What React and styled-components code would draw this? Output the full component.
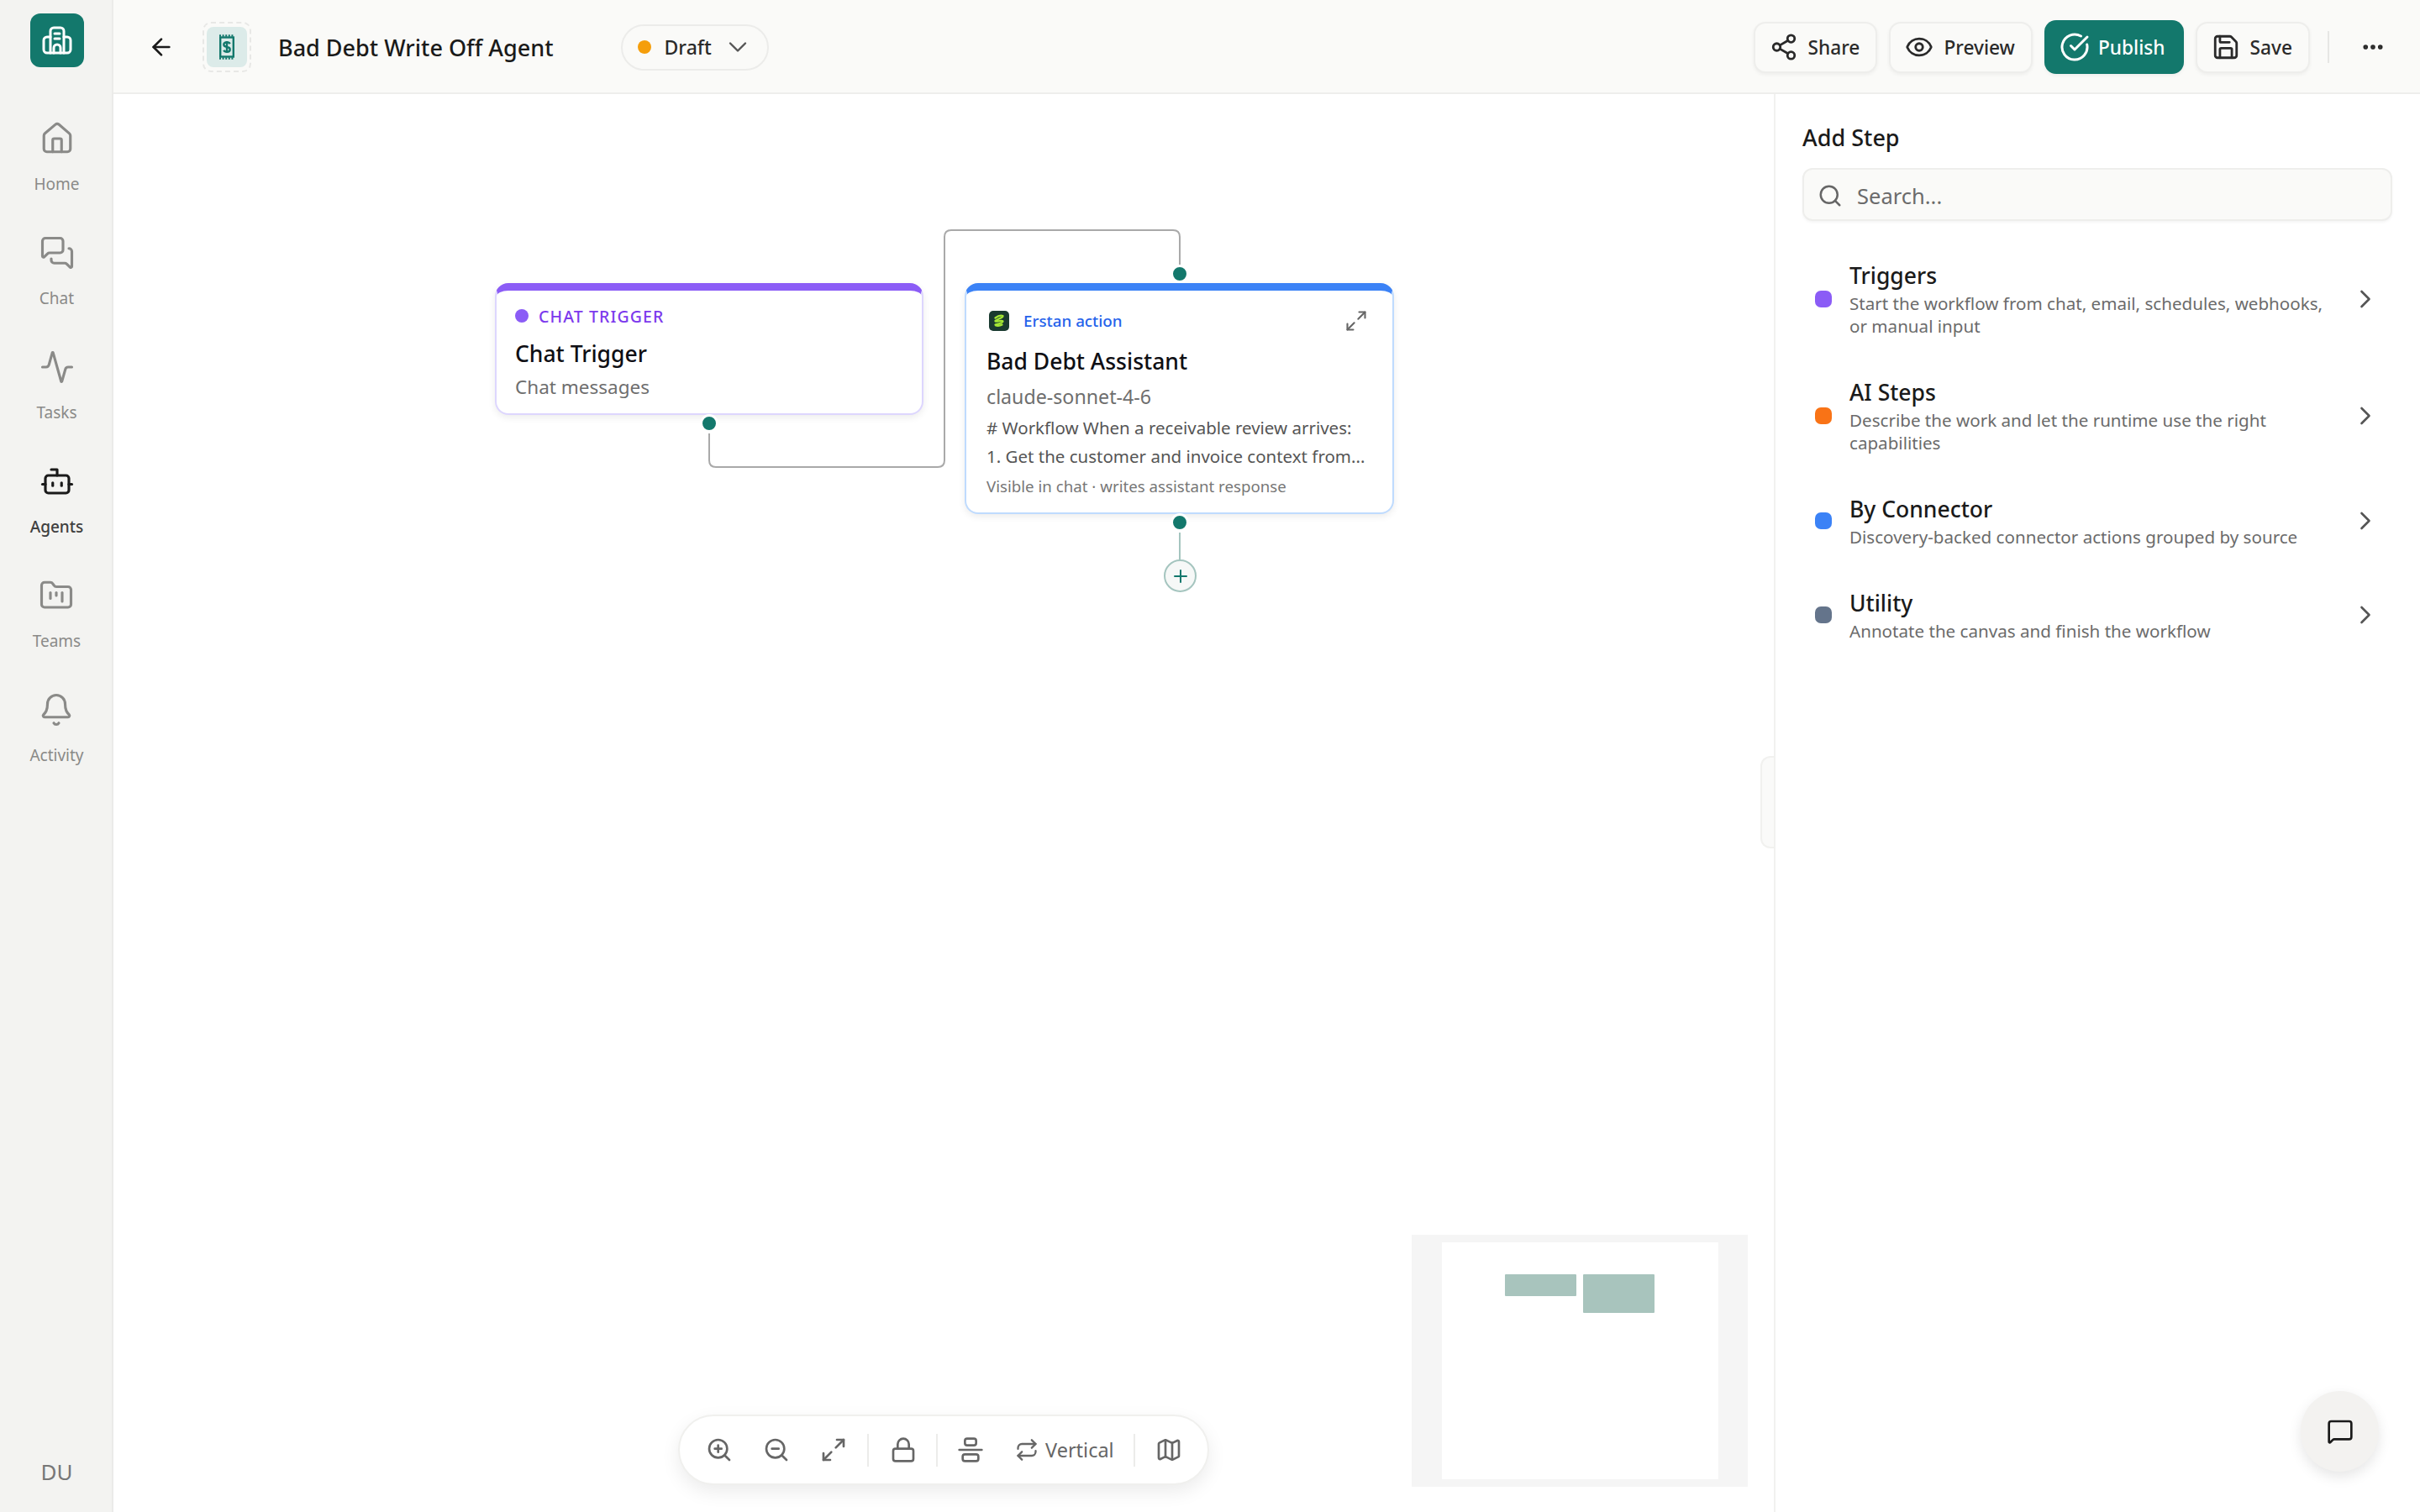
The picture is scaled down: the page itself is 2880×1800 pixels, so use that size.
import React from 'react';
import styled, { createGlobalStyle } from 'styled-components';
import {
  Activity, AlignVerticalJustifyCenter, ArrowLeft, Bell, Bot, ChevronDown, ChevronRight,
  CircleCheckBig, Ellipsis, Eye, FolderKanban, House, Lock, Map as MapIcon, Maximize2, MessageSquare,
  MessagesSquare, Plus, Repeat, Save, Search, Share2, ZoomIn, ZoomOut,
} from 'lucide-react';

const teal = '#13786c';
const font = '"Noto Sans", "Open Sans", sans-serif';

const GlobalStyle = createGlobalStyle`
  html, body { margin: 0; padding: 0; width: 100%; height: 100%; }
  body { font-family: ${font}; background: #fff; color: #1a1a1a; overflow: hidden; }
  * { box-sizing: border-box; }
`;

const Shell = styled.div`
  display: flex;
  width: 2880px;
  height: 1800px;
`;

// left rail
const Rail = styled.nav`
  width: 135px;
  flex: none;
  display: flex;
  flex-direction: column;
  align-items: center;
  background: #f3f3f1;
  border-right: 2px solid #ebebe9;
  padding: 16px 0 30px 2px;
`;

const Logo = styled.div`
  width: 64px;
  height: 64px;
  flex: none;
  border-radius: 12px;
  background: ${teal};
  color: #fff;
  display: flex;
  align-items: center;
  justify-content: center;
  margin-bottom: 56px;
`;

const RailItem = styled.a`
  height: 136px;
  display: flex;
  flex-direction: column;
  align-items: center;
  gap: 20px;
  padding-top: 8px;
  font-size: 19px;
  line-height: 26px;
  color: ${({ $active }) => ($active ? '#404040' : '#8a8a88')};
  font-weight: ${({ $active }) => ($active ? 500 : 400)};
  svg { color: ${({ $active }) => ($active ? '#1a1a1a' : '#8a8a88')}; }
`;

const Initials = styled.div`
  margin-top: auto;
  font-size: 26px;
  color: #777;
`;

const Main = styled.div`
  flex: 1;
  min-width: 0;
  display: flex;
  flex-direction: column;
`;

// top bar
const TopBar = styled.header`
  height: 112px;
  flex: none;
  display: flex;
  align-items: center;
  background: #fafaf8;
  border-bottom: 2px solid #eeeeec;
  padding: 2px 41px 0 41px;
`;

const BackButton = styled.div`
  width: 32px;
  display: flex;
  color: #1a1a1a;
  margin-right: 33px;
`;

const AgentIcon = styled.div`
  width: 58px;
  height: 60px;
  border: 2px dashed #e8e8e6;
  border-radius: 10px;
  display: flex;
  align-items: center;
  justify-content: center;
  margin-right: 32px;
`;

const AgentIconInner = styled.div`
  width: 48px;
  height: 48px;
  border-radius: 8px;
  background: #dcebe9;
  color: ${teal};
  display: flex;
  align-items: center;
  justify-content: center;
`;

const Title = styled.h1`
  margin: 0 80px 0 0;
  font-size: 27px;
  font-weight: 500;
  color: #1a1a1a;
`;

const StatusPill = styled.div`
  width: 176px;
  height: 55px;
  border: 2px solid #ececea;
  border-radius: 28px;
  display: flex;
  align-items: center;
  padding-left: 18px;
  font-size: 23px;
  font-weight: 500;
  color: #2a2a2a;
  svg { margin-left: 13px; color: #555; }
`;

const StatusDot = styled.span`
  width: 16px;
  height: 16px;
  border-radius: 50%;
  background: #f59e0b;
  margin-right: 16px;
`;

const Actions = styled.div`
  margin-left: auto;
  display: flex;
  align-items: center;
  gap: 14px;
`;

const ActionButton = styled.button`
  height: ${({ $primary }) => ($primary ? '64px' : '61px')};
  padding: ${({ $primary }) => ($primary ? '0 22px 0 18px' : '0 19px 0 17px')};
  display: flex;
  align-items: center;
  gap: ${({ $primary }) => ($primary ? '10px' : '12px')};
  font-family: ${font};
  font-size: 22.7px;
  font-weight: 500;
  border-radius: 14px;
  color: ${({ $primary }) => ($primary ? '#fff' : '#2a2a2a')};
  background: ${({ $primary }) => ($primary ? teal : '#fafaf8')};
  border: ${({ $primary }) => ($primary ? 'none' : '2px solid #eeeeec')};
  box-shadow: 0 2px 4px rgba(0, 0, 0, 0.05);
`;

const Divider = styled.div`
  width: 2px;
  height: 38px;
  background: #e6e6e4;
  margin-left: 7px;
  margin-right: 23px;
`;

const MoreButton = styled.div`
  display: flex;
  color: #2a2a2a;
`;

const Body = styled.div`
  flex: 1;
  min-height: 0;
  display: flex;
`;

// canvas
const Canvas = styled.section`
  position: relative;
  flex: 1;
  background: #fff;
`;

const Wires = styled.svg`
  position: absolute;
  left: 0;
  top: 0;
  width: 100%;
  height: 100%;
  pointer-events: none;
`;

const Node = styled.div`
  position: absolute;
  left: ${({ $x }) => $x}px;
  top: ${({ $y }) => $y}px;
  width: ${({ $w }) => $w}px;
  height: ${({ $h }) => $h}px;
  background: #fff;
  border: 2px solid ${({ $border }) => $border};
  border-top: 9px solid ${({ $accent }) => $accent};
  border-radius: 16px;
  box-shadow: 0 3px 8px rgba(0, 0, 0, 0.08);
  padding: 0 ${({ $pad }) => $pad}px;
`;

const TriggerLabel = styled.div`
  display: flex;
  align-items: center;
  gap: 12px;
  height: 24px;
  margin-top: 18px;
  font-size: 19.5px;
  font-weight: 500;
  letter-spacing: 1.1px;
  color: #7c3aed;
`;

const TriggerDot = styled.span`
  width: 16px;
  height: 16px;
  border-radius: 50%;
  background: #8b5cf6;
`;

const NodeTitle = styled.div`
  font-size: 26.5px;
  font-weight: 500;
  line-height: 38px;
  color: #0f0f14;
  margin-top: ${({ $top }) => $top}px;
`;

const NodeSub = styled.div`
  font-size: ${({ $size }) => $size}px;
  line-height: 32px;
  color: #6e6e6e;
  margin-top: ${({ $top }) => $top}px;
`;

const ActionHead = styled.div`
  display: flex;
  align-items: center;
  height: 26px;
  margin-top: 23px;
  margin-left: 3px;
  gap: 17px;
  font-size: 18.8px;
  font-weight: 500;
  color: #2563eb;
  svg:last-child { margin-left: auto; margin-right: 5px; color: #666; }
`;

const NodeBody = styled.div`
  font-size: 20.5px;
  line-height: 34px;
  color: #555;
  margin-top: 4px;
  width: 458px;
  white-space: nowrap;
`;

const NodeFoot = styled.div`
  font-size: 18.7px;
  line-height: 28px;
  color: #777;
  margin-top: 5px;
`;

const Port = styled.span`
  position: absolute;
  left: ${({ $x }) => $x - 11}px;
  top: ${({ $y }) => $y - 11}px;
  width: 22px;
  height: 22px;
  border-radius: 50%;
  background: ${teal};
  border: 3px solid #fff;
`;

const AddNode = styled.div`
  position: absolute;
  left: 1250px;
  top: 554px;
  width: 39px;
  height: 39px;
  border-radius: 50%;
  border: 2px solid #a5c5bf;
  background: #f6f8f7;
  color: ${teal};
  display: flex;
  align-items: center;
  justify-content: center;
`;

const Tools = styled.div`
  position: absolute;
  left: 672px;
  top: 1572px;
  width: 632px;
  height: 84px;
  display: flex;
  align-items: center;
  padding-left: 31px;
  background: #fff;
  border: 2px solid #f0f0ee;
  border-radius: 42px;
  box-shadow: 0 8px 22px rgba(0, 0, 0, 0.08);
  color: #666;
  font-size: 23.5px;
`;

const ToolIcon = styled.span`
  display: flex;
  margin-right: ${({ $gap }) => $gap}px;
`;

const ToolSep = styled.span`
  width: 2px;
  height: 39px;
  background: #ececea;
  margin-left: ${({ $before = 0 }) => $before}px;
  margin-right: ${({ $gap }) => $gap}px;
`;

const Minimap = styled.svg`
  position: absolute;
  left: 1545px;
  top: 1358px;
  width: 400px;
  height: 300px;
`;

const PanelHandle = styled.div`
  position: absolute;
  right: 0;
  top: 788px;
  width: 16px;
  height: 110px;
  background: #fafaf9;
  border: 2px solid #f1f1ef;
  border-right: none;
  border-radius: 12px 0 0 12px;
`;

// add step panel
const Panel = styled.aside`
  position: relative;
  width: 769px;
  flex: none;
  background: #fff;
  border-left: 2px solid #f1f1ef;
  padding: 32px 33px 0 32px;
`;

const PanelTitle = styled.h2`
  margin: 0;
  font-size: 27px;
  font-weight: 500;
  line-height: 40px;
  color: #1a1a1a;
`;

const SearchBox = styled.div`
  height: 63px;
  margin-top: 16px;
  display: flex;
  align-items: center;
  gap: 17px;
  padding: 2px 0 0 16px;
  background: #fafaf8;
  border: 2px solid #eeeeec;
  border-radius: 12px;
  box-shadow: 0 2px 3px rgba(0, 0, 0, 0.04);
  font-size: 25.5px;
  color: #6b6b6b;
`;

const StepList = styled.div`
  margin-top: 23px;
`;

const StepRow = styled.div`
  display: flex;
  align-items: center;
  min-height: ${({ $tall }) => ($tall ? 139 : 112)}px;
  padding-left: 15px;
`;

const StepDot = styled.span`
  width: 20px;
  height: 20px;
  flex: none;
  border-radius: 7px;
  background: ${({ $color }) => $color};
  margin-right: 21px;
`;

const StepText = styled.div`
  flex: 1;
  min-width: 0;
  max-width: 580px;
`;

const StepName = styled.div`
  font-size: 26.5px;
  font-weight: 500;
  line-height: 38px;
  color: #1a1a1a;
`;

const StepDesc = styled.div`
  font-size: 20.6px;
  line-height: 27px;
  margin-top: 1px;
  color: #6b6b6b;
`;

const StepArrow = styled.span`
  margin-left: auto;
  margin-right: 14px;
  display: flex;
  color: #555;
`;

const ChatFab = styled.div`
  position: absolute;
  right: 49px;
  top: 1544px;
  width: 93px;
  height: 96px;
  border-radius: 50%;
  background: #f3f2f0;
  box-shadow: 0 6px 16px rgba(0, 0, 0, 0.1);
  color: #1a1a1a;
  display: flex;
  align-items: center;
  justify-content: center;
`;

const navItems = [
  { label: 'Home', Icon: House },
  { label: 'Chat', Icon: MessagesSquare },
  { label: 'Tasks', Icon: Activity },
  { label: 'Agents', Icon: Bot, active: true },
  { label: 'Teams', Icon: FolderKanban },
  { label: 'Activity', Icon: Bell },
];

const steps = [
  { name: 'Triggers', desc: 'Start the workflow from chat, email, schedules, webhooks, or manual input', color: '#8b5cf6', tall: true },
  { name: 'AI Steps', desc: 'Describe the work and let the runtime use the right capabilities', color: '#f97316', tall: true },
  { name: 'By Connector', desc: 'Discovery-backed connector actions grouped by source', color: '#3b82f6' },
  { name: 'Utility', desc: 'Annotate the canvas and finish the workflow', color: '#64748b' },
];

const HotelMark = () => (
  <svg width="36" height="34" viewBox="0 0 36 34" fill="none" stroke="currentColor" strokeWidth="3" strokeLinecap="round" strokeLinejoin="round">
    <path d="M10 32V6a4 4 0 0 1 4-4h8a4 4 0 0 1 4 4v26" />
    <path d="M10 13H6a4 4 0 0 0-4 4v11a4 4 0 0 0 4 4h24a4 4 0 0 0 4-4V17a4 4 0 0 0-4-4h-4" />
    <path d="M15 9h6M15 15h6M14 32v-6a4 4 0 0 1 8 0v6" />
  </svg>
);

const ReceiptMark = () => (
  <svg width="20" height="30" viewBox="0 0 20 30" fill="none" stroke="currentColor" strokeWidth="2.4">
    <rect x="2.2" y="3.5" width="15.6" height="23" />
    <path d="M1 1.5H19M1 28.5H19" strokeDasharray="2 1.6" />
    <path d="M10 8v14M13.6 11.2c-.5-1.3-2-2-3.6-2-2.1 0-3.7 1-3.7 2.9s1.6 2.6 3.7 2.9 3.7 1 3.7 2.9-1.6 2.9-3.7 2.9c-1.6 0-3.1-.7-3.7-2" />
  </svg>
);

const ErstanMark = () => (
  <svg width="24" height="24" viewBox="0 0 24 24">
    <rect width="24" height="24" rx="5" fill="#1a3a30" />
    <path d="M7.5 8.5C10 6.5 14 5 16.5 6c1 2-7.5 4-9 6-.5 2 7.5-1.500 9 .5.5 2-7.500 3.500-9 4 .5 2 5.500 1.500 8 0" fill="none" stroke="#a3e635" strokeWidth="2.3" strokeLinecap="round" strokeLinejoin="round" />
  </svg>
);

export default function App() {
  return (
    <>
      <GlobalStyle />
      <Shell>
        <Rail>
          <Logo><HotelMark /></Logo>
          {navItems.map(({ label, Icon, active }) => (
            <RailItem key={label} $active={active}>
              <Icon size={42} strokeWidth={1.8} />
              {label}
            </RailItem>
          ))}
          <Initials>DU</Initials>
        </Rail>
        <Main>
          <TopBar>
            <BackButton><ArrowLeft size={32} strokeWidth={2} /></BackButton>
            <AgentIcon>
              <AgentIconInner><ReceiptMark /></AgentIconInner>
            </AgentIcon>
            <Title>Bad Debt Write Off Agent</Title>
            <StatusPill>
              <StatusDot />
              Draft
              <ChevronDown size={36} strokeWidth={1.6} />
            </StatusPill>
            <Actions>
              <ActionButton><Share2 size={34} strokeWidth={2} />Share</ActionButton>
              <ActionButton><Eye size={34} strokeWidth={2} />Preview</ActionButton>
              <ActionButton $primary><CircleCheckBig size={36} strokeWidth={2} />Publish</ActionButton>
              <ActionButton><Save size={34} strokeWidth={2} />Save</ActionButton>
              <Divider />
              <MoreButton><Ellipsis size={30} strokeWidth={2.5} /></MoreButton>
            </Actions>
          </TopBar>
          <Body>
            <Canvas>
              <Wires>
                <path d="M709 404 V436 Q709 444 717 444 H981 Q989 444 989 436 V170 Q989 162 997 162 H1261 Q1269 162 1269 170 V204" fill="none" stroke="#a9a9a9" strokeWidth="2" />
                <path d="M1269 522 V556" fill="none" stroke="#a5c5bf" strokeWidth="2" />
              </Wires>
              <Node $x={454} $y={225} $w={510} $h={157} $pad={22} $border="#ddd6fe" $accent="#8b5cf6">
                <TriggerLabel><TriggerDot />CHAT TRIGGER</TriggerLabel>
                <NodeTitle $top={14}>Chat Trigger</NodeTitle>
                <NodeSub $top={5} $size={22.5}>Chat messages</NodeSub>
              </Node>
              <Port $x={709} $y={392} />
              <Node $x={1013} $y={225} $w={511} $h={275} $pad={24} $border="#bfdbfe" $accent="#3b82f6">
                <ActionHead>
                  <ErstanMark />
                  Erstan action
                  <Maximize2 size={28} strokeWidth={1.8} />
                </ActionHead>
                <NodeTitle $top={16}>Bad Debt Assistant</NodeTitle>
                <NodeSub $top={7} $size={23.2}>claude-sonnet-4-6</NodeSub>
                <NodeBody>
                  # Workflow When a receivable review arrives:
                  <br />
                  1. Get the customer and invoice context from...
                </NodeBody>
                <NodeFoot>Visible in chat · writes assistant response</NodeFoot>
              </Node>
              <Port $x={1269} $y={214} />
              <Port $x={1269} $y={510} />
              <AddNode><Plus size={24} strokeWidth={2} /></AddNode>
              <Minimap viewBox="0 0 400 300">
                <path fillRule="evenodd" d="M0 0H400V300H0Z M36 9V291H365V9Z" fill="#f5f5f5" />
                <rect x="111" y="47" width="85" height="26" rx="1" fill="#a8c4bd" />
                <rect x="204" y="47" width="85" height="46" rx="1" fill="#a8c4bd" />
              </Minimap>
              <Tools>
                <ToolIcon $gap={36}><ZoomIn size={32} strokeWidth={2} /></ToolIcon>
                <ToolIcon $gap={36}><ZoomOut size={32} strokeWidth={2} /></ToolIcon>
                <ToolIcon $gap={24}><Maximize2 size={32} strokeWidth={2} /></ToolIcon>
                <ToolSep $gap={25} />
                <ToolIcon $gap={23}><Lock size={32} strokeWidth={2} /></ToolIcon>
                <ToolSep $gap={23} />
                <ToolIcon $gap={37}><AlignVerticalJustifyCenter size={32} strokeWidth={2} /></ToolIcon>
                <ToolIcon $gap={8}><Repeat size={28} strokeWidth={2} /></ToolIcon>
                Vertical
                <ToolSep $before={23} $gap={24} />
                <ToolIcon $gap={0}><MapIcon size={32} strokeWidth={2} /></ToolIcon>
              </Tools>
              <PanelHandle />
            </Canvas>
            <Panel>
              <PanelTitle>Add Step</PanelTitle>
              <SearchBox><Search size={30} strokeWidth={2} color="#666" />Search...</SearchBox>
              <StepList>
                {steps.map((s) => (
                  <StepRow key={s.name} $tall={s.tall}>
                    <StepDot $color={s.color} />
                    <StepText>
                      <StepName>{s.name}</StepName>
                      <StepDesc>{s.desc}</StepDesc>
                    </StepText>
                    <StepArrow><ChevronRight size={36} strokeWidth={1.75} /></StepArrow>
                  </StepRow>
                ))}
              </StepList>
              <ChatFab><MessageSquare size={32} strokeWidth={2} /></ChatFab>
            </Panel>
          </Body>
        </Main>
      </Shell>
    </>
  );
}
